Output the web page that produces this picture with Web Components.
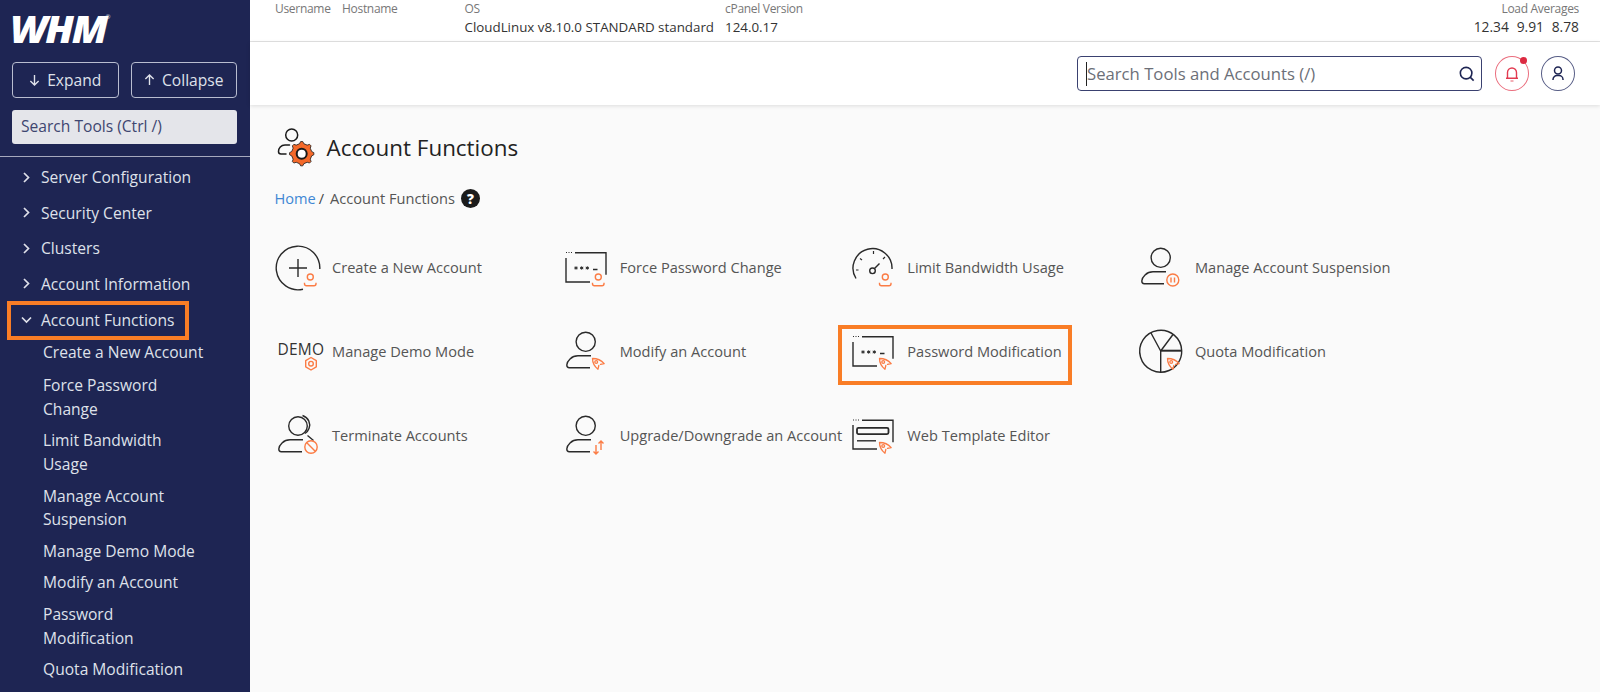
<!DOCTYPE html>
<html lang="en"><head><meta charset="utf-8"><title>WHM Account Functions</title>
<style>
html,body{margin:0;height:692px;overflow:hidden;background:#fafafa;font-family:"Open Sans","Noto Sans",sans-serif}
</style></head><body>
<whm-app>
  <whm-sidebar slot="side">
    <whm-nav-group label="Server Configuration"></whm-nav-group>
    <whm-nav-group label="Security Center"></whm-nav-group>
    <whm-nav-group label="Clusters"></whm-nav-group>
    <whm-nav-group label="Account Information"></whm-nav-group>
    <whm-nav-group label="Account Functions" open highlight>
      <whm-nav-link>Create a New Account</whm-nav-link>
      <whm-nav-link>Force Password Change</whm-nav-link>
      <whm-nav-link>Limit Bandwidth Usage</whm-nav-link>
      <whm-nav-link>Manage Account Suspension</whm-nav-link>
      <whm-nav-link>Manage Demo Mode</whm-nav-link>
      <whm-nav-link>Modify an Account</whm-nav-link>
      <whm-nav-link>Password Modification</whm-nav-link>
      <whm-nav-link>Quota Modification</whm-nav-link>
    </whm-nav-group>
  </whm-sidebar>
  <whm-statusbar slot="main"></whm-statusbar>
  <whm-searchbar slot="main"></whm-searchbar>
  <whm-content slot="main">
    <whm-tool icon="create">Create a New Account</whm-tool>
    <whm-tool icon="force">Force Password Change</whm-tool>
    <whm-tool icon="limit">Limit Bandwidth Usage</whm-tool>
    <whm-tool icon="suspend">Manage Account Suspension</whm-tool>
    <whm-tool icon="demo">Manage Demo Mode</whm-tool>
    <whm-tool icon="modify">Modify an Account</whm-tool>
    <whm-tool icon="password" highlight>Password Modification</whm-tool>
    <whm-tool icon="quota">Quota Modification</whm-tool>
    <whm-tool icon="terminate">Terminate Accounts</whm-tool>
    <whm-tool icon="upgrade">Upgrade/Downgrade an Account</whm-tool>
    <whm-tool icon="template">Web Template Editor</whm-tool>
  </whm-content>
</whm-app>
<script>
const FONT='"Open Sans","Noto Sans",sans-serif';
function def(name,html,extra){
  customElements.define(name,class extends HTMLElement{
    connectedCallback(){
      if(this.shadowRoot)return;
      const r=this.attachShadow({mode:'open'});
      r.innerHTML=typeof html==='function'?html(this):html;
      if(extra)extra(this,r);
    }
  });
}
def('whm-app',`<style>
:host{display:flex;width:1600px;height:692px;overflow:hidden}
.side{flex:0 0 250px;display:block}
.main{flex:1;min-width:0;display:flex;flex-direction:column}
</style><div class="side"><slot name="side"></slot></div><div class="main"><slot name="main"></slot></div>`);

def('whm-sidebar',`<style>
:host{display:block;width:250px;height:692px;background:#1e2553;color:#dfe1ea;font-family:${FONT};overflow:hidden}
.logo{height:62px;box-sizing:border-box;padding:5px 0 0 10px;display:flex;align-items:flex-start;color:#fff}
.logo b{font:italic 800 36.5px/48px "Open Sans",sans-serif;letter-spacing:-2px;transform:scaleX(1.1);transform-origin:left}
.logo sup{font:400 6px/8px "Open Sans",sans-serif;margin:8px 0 0 8px;color:#dfe1ea}
.btns{display:flex;gap:12px;padding:0 13px 0 12px}
.btn{flex:1;height:36px;box-sizing:border-box;border:1px solid #b9bdd0;border-radius:4px;display:flex;align-items:center;justify-content:center;gap:7px;font-size:15.6px;color:#dfe1ea}
.btn svg{width:11px;height:12px}
.search{margin:12px 13px 0 12px;height:34px;box-sizing:border-box;background:#e4e5ea;border-radius:3px;padding:0 9px;font-size:15.6px;line-height:33px;color:#3e4670}
hr{border:0;border-top:1px solid #a6a9bd;margin:12px 0 2.400px}
</style>
<div class="logo"><b>WHM</b><sup>®</sup></div>
<div class="btns">
 <div class="btn"><svg viewBox="0 0 12 13" fill="none" stroke="currentColor" stroke-width="1.500"><path d="M6 1v11M1.500 7.500 6 12l4.500-4.500"/></svg>Expand</div>
 <div class="btn"><svg viewBox="0 0 12 13" fill="none" stroke="currentColor" stroke-width="1.500"><path d="M6 12V1M1.500 5.500 6 1l4.500 4.500"/></svg>Collapse</div>
</div>
<div class="search">Search Tools (Ctrl /)</div>
<hr><slot></slot>`);

def('whm-nav-group',h=>`<style>
:host{display:block;font-family:${FONT}}
.head{position:relative;height:35.600px;display:flex;align-items:center;padding-left:22px;font-size:15.6px;color:#dfe1ea}
.head svg{width:9px;height:11px;margin-right:10px;flex:none}
:host([highlight]) .head::after{content:"";position:absolute;left:7px;top:-1px;width:182px;height:39.500px;box-sizing:border-box;border:4px solid #f97d26}
:host([open]) .subs{margin-top:-1px}
</style><div class="head">${h.hasAttribute('open')
 ?'<svg viewBox="0 0 11 11" fill="none" stroke="currentColor" stroke-width="1.700" style="width:11px;margin-right:9px;margin-left:-1px"><path d="M1 3.500 5.500 8 10 3.500"/></svg>'
 :'<svg viewBox="0 0 9 11" fill="none" stroke="currentColor" stroke-width="1.700"><path d="M2 1l4.500 4.500L2 10"/></svg>'}${h.getAttribute('label')}</div><div class="subs"><slot></slot></div>`);

def('whm-nav-link',`<style>
:host{display:block;box-sizing:border-box;padding:4.250px 45px 4.250px 43px;font:15.6px/23.300px ${FONT};color:#dfe1ea}
:host(:first-child){padding-bottom:6.200px}
</style><slot></slot>`);

def('whm-stat',h=>`<style>
:host{display:block;font-family:${FONT}}
.l{font-size:12px;line-height:17px;color:#777;letter-spacing:-.3px}
.v{font-size:13.35px;line-height:20px;color:#333;white-space:pre}
:host([end]) {text-align:right}
:host([end]) .v{font-size:13.8px;word-spacing:.3px}
</style><div class="l">${h.getAttribute('label')}</div><div class="v">${h.getAttribute('value')||' '}</div>`);

def('whm-statusbar',`<style>
:host{display:flex;height:42px;box-sizing:border-box;background:#fff;border-bottom:1px solid #e3e3e3;padding:0 21px 0 25px;gap:15px}
.sp{flex:1}
</style>
<whm-stat label="Username" style="width:52px"></whm-stat>
<whm-stat label="Hostname" style="width:107.500px"></whm-stat>
<whm-stat label="OS" value="CloudLinux v8.10.0 STANDARD standard" style="margin-right:-4px"></whm-stat>
<whm-stat label="cPanel Version" value="124.0.17"></whm-stat>
<div class="sp"></div>
<whm-stat end label="Load Averages" value="12.34  9.91  8.78"></whm-stat>`);

def('whm-searchbar',`<style>
:host{display:flex;align-items:center;height:63px;box-sizing:border-box;background:#fff;padding:0 25px 0 0;box-shadow:0 1px 4px rgba(0,0,0,.12);justify-content:flex-end;gap:12.500px;font-family:${FONT};position:relative}
.box{width:405px;height:35px;box-sizing:border-box;border:1px solid #3a4170;border-radius:4px;display:flex;align-items:center;padding:0 6px 0 8px;font-size:16.7px;color:#6c6f78}
.caret{width:1px;height:24px;background:#222;flex:none}
.t{flex:1}
.box svg{width:16px;height:16px}
.c{width:34px;height:35px;box-sizing:border-box;border-radius:50%;border:1px solid #565c85;display:flex;align-items:center;justify-content:center;position:relative}
.bell{border-color:#ea6d7d}
.bell::after{content:"";position:absolute;width:7px;height:7px;border-radius:50%;background:#dc2a41;right:.5px;top:0}
.c svg{width:16px;height:18px}
</style>
<div class="box"><span class="caret"></span><span class="t">Search Tools and Accounts (/)</span>
<svg viewBox="0 0 18 18" fill="none" stroke="#1e2553" stroke-width="1.800"><circle cx="8" cy="8" r="6.500"/><path d="M12.500 12.500 16.500 16.500"/></svg></div>
<div class="c bell"><svg viewBox="0 0 16 18" fill="none" stroke="#e23a50" stroke-width="1.400"><path d="M3.500 13V7.500a4.500 4.500 0 0 1 9 0V13M2 13.300h12"/><path d="M6.500 16h3" stroke="#ee8a96"/></svg></div>
<div class="c"><svg viewBox="0 0 16 18" fill="none" stroke="#1e2553" stroke-width="1.500"><circle cx="8" cy="5.500" r="3.500"/><path d="M3 15v-.5a4 4 0 0 1 4-4h2a4 4 0 0 1 4 4v.5"/></svg></div>`);

function gearPath(cx,cy,R,r,n){
  let d='';
  for(let i=0;i<n;i++){
    const a=i/n*2*Math.PI, s=Math.PI/n;
    const p=(rad,ang)=>(cx+rad*Math.cos(ang)).toFixed(2)+' '+(cy+rad*Math.sin(ang)).toFixed(2);
    d+=(i?'L':'M')+p(r,a-s*.55)+'L'+p(R,a-s*.22)+'L'+p(R,a+s*.22)+'L'+p(r,a+s*.55);
  }
  return d+'Z';
}
const titleIcon=`<svg width="40" height="38" viewBox="0 0 40 38" fill="none" stroke="#1b1b1b" stroke-width="1.500" style="flex:none;overflow:visible">
<circle cx="14.700" cy="7" r="6"/><path d="M12.500 17H8C4 17 1.500 20 1.500 23.500c0 1.500 1 2.500 2.500 2.500H9" stroke-linecap="round"/>
<path fill="#f4692a" stroke-width=".8" stroke-linejoin="round" d="${gearPath(24.7,25.7,12.2,10.2,8)}"/>
<circle cx="24.700" cy="25.700" r="5" fill="#fff" stroke-width="2"/></svg>`;

def('whm-content',`<style>
:host{display:block;flex:1;padding:0 0 0 24.500px;font-family:${FONT};background:#fafafa}
.title{display:flex;align-items:center;gap:10px;height:38px;margin-top:23px;padding-left:2px;font-size:22.4px;color:#222}
.crumb{display:flex;align-items:center;margin-top:21px;height:22px;font-size:14.6px;color:#555}
.crumb a{color:#3f87d4;text-decoration:none}
.crumb i{font-style:normal;margin:0 6px 0 3px;color:#444}
.crumb svg{width:19px;height:19px;margin-left:6.500px}
.grid{display:grid;grid-template-columns:repeat(4,287.670px);grid-auto-rows:84px;margin:16px 0 0 1.500px}
</style>
<div class="title">${titleIcon}<span>Account Functions</span></div>
<div class="crumb"><a>Home</a><i>/</i><span>Account Functions</span>
<svg viewBox="0 0 18 18"><circle cx="9" cy="9" r="9" fill="#1b1b1b"/><text x="9" y="14" text-anchor="middle" font-family="Open Sans" font-weight="800" font-size="13" fill="#fff">?</text></svg></div>
<div class="grid"><slot></slot></div>`);

const O='#fb7c45';
const star=x=>`M${x} 22.300v3.400M${x-1.6} 23.200l3.200 1.600M${x-1.6} 24.800l3.200-1.600`;
const STARS=`<path d="${star(12)}${star(17.7)}${star(23.3)}" stroke-width="1"/><path d="M29 25.500h4.500" stroke-width="1.500"/>`;
const W='<path d="M11 8.700h31v22M2 14v24h24"/><path d="M2 8.500h1M4.500 8.500h1M7 8.500h1" stroke-width="1"/>';
const PERSON=`<g stroke="${O}"><circle cx="34.300" cy="33" r="3"/><path d="M28.500 38.800v1a2 2 0 0 0 2 2h7.500a2 2 0 0 0 2-2v-1"/></g>`;
const NIB=`<g stroke="${O}" stroke-width="1.300" stroke-linecap="round" stroke-linejoin="round"><path d="M36.500 36.300 40.200 35.600C37.500 32.500 33 30.500 28.500 30.500 28.500 35 30.500 38.500 34 41.200L34.800 37.500"/><circle cx="32.200" cy="34" r="1.400"/></g>`;
const USER=`<circle cx="21.700" cy="13.800" r="9.600"/><path d="M27 27.800H14C7.500 27.800 3 33 2.800 37c0 1.700.8 2.700 2.500 2.700H26"/>`;
const ICONS={
create:`<path d="M27 45.200A21.800 21.800 0 1 1 43.800 25"/><path d="M22 15v18M13 24h18"/>${PERSON}`,
force:`${W}${STARS}${PERSON}`,
limit:`<path d="M5 34.500A19.500 19.500 0 1 1 41 25"/><path d="M5 26h2.500M9 14.500l2 1.500M22.500 7v3M34 13l-2 2" stroke-width="1.200"/><circle cx="21.500" cy="26.800" r="2.800"/><path d="M23.500 24.500l5-5"/>${PERSON}`,
suspend:`${USER.replace('H26','H25')}<g stroke="${O}"><circle cx="33.800" cy="36" r="6"/><path d="M32 33.500v5M35.500 33.500v5"/></g>`,
demo:`<text x="1.500" y="26.500" font-family="Open Sans" font-size="15.500" fill="#333" stroke="none" letter-spacing=".2">DEMO</text><g stroke="${O}" stroke-linejoin="round"><path d="M35 29.500l5.300 3.100v6.200L35 42l-5.300-3.200v-6.200z"/><circle cx="35" cy="35.700" r="2.300"/></g>`,
modify:`${USER}${NIB}`,
password:`${W}${STARS}${NIB}`,
quota:`<path d="M30 42.500A21 21 0 1 1 42.700 22.700 21 21 0 0 1 30 42.500"/><path d="M21.700 23V44M21.700 23 12 5M21.700 23 34 6.500"/><path d="M21.700 22.700h21" stroke-width="2"/>${NIB}`,
terminate:`<circle cx="22" cy="14" r="9.300"/><path d="M26.500 3.500c6 2 8.500 8 6.500 13-.7 2-2 3.800-4 5M31.500 23.500l6 5M27 27.800H14C7.500 27.800 3 33 2.800 37c0 1.700.8 2.700 2.500 2.700H26"/><g stroke="${O}"><circle cx="35" cy="35" r="6.200"/><path d="M30.800 30.800l8.400 8.400"/></g>`,
upgrade:`${USER}<g stroke="${O}" stroke-width="1.400"><path d="M32 33v9M29.500 39.500 32 42l2.500-2.500M37 38v-9M34.500 31.500 37 29l2.500 2.500"/></g>`,
template:`<path d="M11 8.200h31v22M2 13v24h24"/><path d="M2 8h1M4.500 8h1M7 8h1" stroke-width="1"/><rect x="6" y="15.800" width="31.500" height="6.300" rx="1.500" stroke-width="1.800"/><path d="M6 28.800h19"/>${NIB}`
};
def('whm-tool',h=>`<style>
:host{display:flex;align-items:center;position:relative;gap:8px;font:14.6px/22px ${FONT};color:#555;white-space:nowrap}
svg{width:48px;height:48px;flex:none;overflow:visible;margin-top:2px}
:host([highlight])::after{content:"";position:absolute;left:-13px;top:15.500px;width:234px;height:60px;box-sizing:border-box;border:4px solid #f97d26}
</style><svg viewBox="0 0 48 48" fill="none" stroke="#2a2a2a" stroke-width="1.400">${ICONS[h.getAttribute('icon')]}</svg><span><slot></slot></span>`);
</script>
</body></html>
